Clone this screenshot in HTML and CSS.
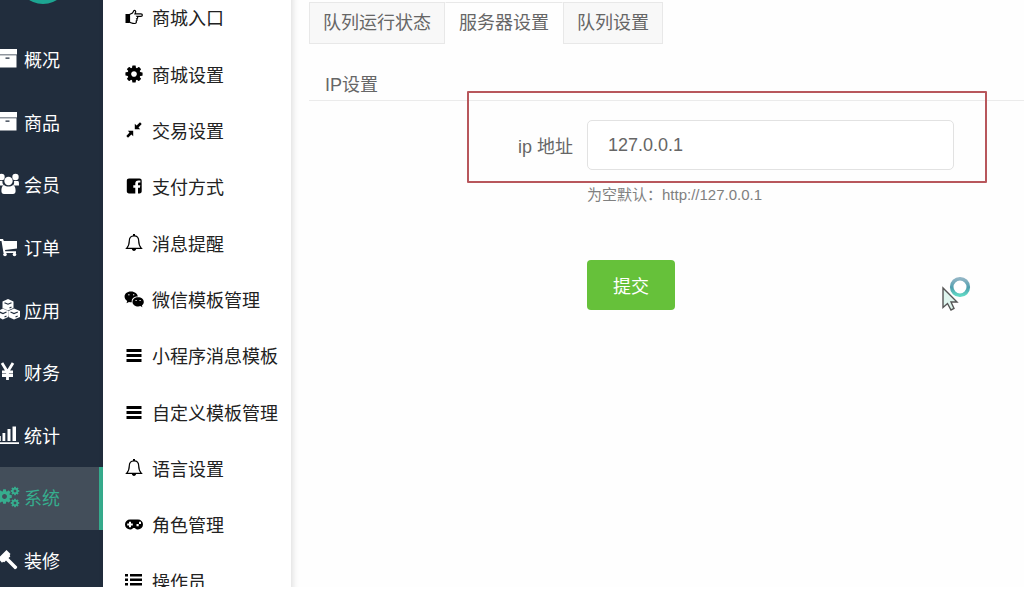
FILE: index.html
```html
<!DOCTYPE html>
<html lang="zh-CN">
<head>
    <meta charset="UTF-8">
    <meta name="viewport" content="width=device-width, initial-scale=1.0">
    <title>服务器设置</title>
    <link rel="stylesheet" href="styles.css">
</head>
<body>
    <!-- shared icons -->
    <svg class="icon-defs" aria-hidden="true">
        <symbol id="i-box" viewBox="0 0 22 22">
            <path d="M0 1h19v5.500H0z"/>
            <path fill-rule="evenodd" d="M0 7.300h18.500V19.500H0zM7.500 9.500v1.200h4V9.500z"/>
        </symbol>
        <symbol id="i-cog" viewBox="0 0 1792 1792">
            <path d="M1152 896q0-106-75-181t-181-75-181 75-75 181 75 181 181 75 181-75 75-181zm512-109v222q0 12-8 23t-20 13l-185 28q-19 54-39 91 35 50 107 138 10 12 10 25t-9 23q-27 37-99 108t-94 71q-12 0-26-9l-138-108q-44 23-91 38-16 136-29 186-7 28-36 28h-222q-14 0-24.500-8.500t-11.500-21.500l-28-184q-49-16-90-37l-141 107q-10 9-25 9-14 0-25-11-126-114-165-168-7-10-7-23 0-12 8-23 15-21 51-66.500t54-70.500q-27-50-41-99l-183-27q-13-2-21-12.500t-8-23.500v-222q0-12 8-23t19-13l186-28q14-46 39-92-40-57-107-138-10-12-10-24 0-10 9-23 26-36 98.500-107.500t94.500-71.500q13 0 26 10l138 107q44-23 91-38 16-136 29-186 7-28 36-28h222q14 0 24.500 8.500t11.500 21.500l28 184q49 16 90 37l142-107q9-9 24-9 13 0 25 10 129 119 165 170 7 8 7 22 0 12-8 23-15 21-51 66.500t-54 70.500q26 50 41 98l183 28q13 2 21 12.500t8 23.500z"/>
        </symbol>
        <symbol id="i-bell" viewBox="0 0 20 20">
            <path d="M10 2.800c-3 0-4.700 2.200-4.700 5 0 4-1 5.800-2.700 7.500h14.800c-1.700-1.700-2.700-3.500-2.700-7.500 0-2.800-1.700-5-4.700-5z" fill="none" stroke="currentColor" stroke-width="1.200"/>
            <path d="M9 1h2v2H9zM7.800 15.500h4.400c0 3.200-4.400 3.200-4.400 0z"/>
        </symbol>
        <symbol id="i-bars" viewBox="0 0 20 20">
            <path d="M2.500 4h15v3h-15zM2.500 9h15v3h-15zM2.500 14h15v3h-15z"/>
        </symbol>
    </svg>

    <div class="app">
        <nav class="sidebar">
            <div class="logo"></div>
            <ul class="nav-list">
                <li><a href="#"><svg><use href="#i-box"/></svg>概况</a></li>
                <li><a href="#"><svg><use href="#i-box"/></svg>商品</a></li>
                <li><a href="#"><svg viewBox="0 0 22 22">
                    <circle cx="3.500" cy="4" r="3.200"/><circle cx="17.500" cy="4" r="3.200"/>
                    <path d="M0 8h4.500c-.3 2.500.5 3.500 1.500 4.500H0zM16 8h3.500c1.500 0 1.500 1 1.500 4.500h-6c1-1 1.300-2 1-4.500z"/>
                    <circle cx="10.500" cy="8" r="4.200"/>
                    <path d="M6 12c2.500 2 6.500 2 9 0 2 .8 2.600 3 2.600 6 0 2-1 3-2.600 3H6c-1.600 0-2.600-1-2.600-3 0-3 .6-5.200 2.600-6z"/>
                </svg>会员</a></li>
                <li><a href="#"><svg viewBox="0 0 22 22">
                    <path d="M0 3h5l.8 2H19v7.500L7 14l.3 1.200H18V17H5.500L3.500 5H0z"/>
                    <circle cx="7" cy="18.500" r="1.800"/><circle cx="16.500" cy="18.500" r="1.800"/>
                </svg>订单</a></li>
                <li><a href="#"><svg viewBox="0 0 22 22">
                    <path d="M10 0l5.500 2.400V9L10 11.500 4.500 9V2.400zM4.800 9.500l5.500 2.500v6L4.800 20.500 0 18v-6zM16 9.500l6 2.500v6l-6 2.500-5.500-2.500v-6z"/>
                    <path class="cut" d="M6.500 3.700L10 5.200l3.500-1.500M1.500 13L5 14.600 8.500 13M12.500 13l3.500 1.600 3.800-1.600M11.500 9l2-1M6.500 18l2-1M17.500 18l2.200-1"/>
                </svg>应用</a></li>
                <li><a href="#"><svg viewBox="0 0 22 22">
                    <path d="M4 2l5.500 9L15 2M4 11h11M4 14.500h11M9.500 10v9" fill="none" stroke="currentColor" stroke-width="2.800"/>
                </svg>财务</a></li>
                <li><a href="#"><svg viewBox="0 0 22 22">
                    <path d="M0 12h2.800v5H0zM4.500 9h2.800v8H4.500zM9.500 5h3v12h-3zM14.500 2.500h3.500V17h-3.500zM0 18.200h21v1.800H0z"/>
                </svg>统计</a></li>
                <li class="active"><a href="#"><svg viewBox="0 0 22 22">
                    <use href="#i-cog" x="-2" y="2" width="17" height="17"/>
                    <use href="#i-cog" x="12" y="0" width="10" height="10"/>
                    <use href="#i-cog" x="12" y="12" width="10" height="10"/>
                </svg>系统</a></li>
                <li><a href="#"><svg viewBox="0 0 22 22">
                    <path d="M0 9.500L8.500 1l4 4-.8 1 .6 1.400L10.500 9l8.500 8.500c1 1-1.500 3.500-2.500 2.500L8 11.500l-1.700 1.700-1.300-.5-1 1z"/>
                </svg>装修</a></li>
            </ul>
        </nav>

        <nav class="submenu">
            <ul class="submenu-list">
                <li><a href="#"><svg viewBox="0 0 20 20">
                    <path d="M5.500 7.500l3-1.500 1.500-2.500c1.200-.3 2 .5 1.600 1.800L11 6.800h6c1.800 0 1.800 2.600 0 2.600h-4c1.200 1.200.8 2-.3 2.400.8 1 .4 1.800-.5 2.200.5 1.200 0 2.500-1.500 2.500-2.500 0-3.500-.8-5.200-1.300z" fill="none" stroke="currentColor" stroke-width="1.200"/>
                    <path d="M1.500 7h4v9h-4z"/>
                </svg>商城入口</a></li>
                <li><a href="#"><svg><use href="#i-cog"/></svg>商城设置</a></li>
                <li><a href="#"><svg viewBox="0 0 20 20">
                    <path d="M10.800 9.200V3.800l1.800 1.700L16 2.300 17.700 4l-3.200 3.400 1.700 1.800zM9.200 10.800v5.400l-1.800-1.700L4 17.700 2.300 16l3.200-3.400-1.700-1.800z"/>
                </svg>交易设置</a></li>
                <li><a href="#"><svg viewBox="0 0 20 20">
                    <path d="M5 2.500h10.500c1.300 0 2.200.9 2.200 2.200v10.600c0 1.300-.9 2.200-2.200 2.200H14v-5.800h1.900l.4-2.400H14V7.800c0-.8.400-1.200 1.200-1.200h1.200V4.500h-2c-2 0-3.100 1.200-3.100 3.100v1.700H9.300v2.400h2v5.800H5c-1.300 0-2.200-.9-2.200-2.200V4.700c0-1.300.9-2.200 2.200-2.200z"/>
                </svg>支付方式</a></li>
                <li><a href="#"><svg><use href="#i-bell"/></svg>消息提醒</a></li>
                <li><a href="#"><svg viewBox="0 0 20 20">
                    <path d="M7 2.500c4 0 6.500 2.400 6.800 5-4 0-6.600 2.300-6 5.700-1 .1-2 0-2.800-.3l-2.500 1.400.7-2.300C-1.500 8.800.3 2.500 7 2.500z"/>
                    <path d="M14 8.300c3.400 0 5.800 2 5.800 4.600 0 1.600-.8 2.700-1.900 3.500l.5 1.800-2-1.100c-4 1.100-7.900-1-7.900-4.200 0-2.600 2.400-4.600 5.500-4.600z"/>
                    <path class="dots" d="M4.200 5.800h1.300M9 5.800h1.300M11.500 11.500h1.200M15.500 11.500h1.200"/>
                </svg>微信模板管理</a></li>
                <li><a href="#"><svg><use href="#i-bars"/></svg>小程序消息模板</a></li>
                <li><a href="#"><svg><use href="#i-bars"/></svg>自定义模板管理</a></li>
                <li><a href="#"><svg><use href="#i-bell"/></svg>语言设置</a></li>
                <li><a href="#"><svg viewBox="0 0 20 20">
                    <path fill-rule="evenodd" d="M6 5.500h8a5 5 0 0 1 0 10c-1.500 0-2.600-.6-3.300-1.500H9.300c-.7.900-1.800 1.500-3.300 1.500a5 5 0 0 1 0-10zM5 7.800v1.700H3.200v2H5v1.800h2v-1.800h1.800v-2H7V7.800zM12.500 10v2.300h2.200V10zM15 7.700v2.200h2V7.700z"/>
                </svg>角色管理</a></li>
                <li><a href="#"><svg viewBox="0 0 20 20">
                    <path d="M1 3h3v2.500H1zM6 3h12v2.500H6zM1 7.500h3V10H1zM6 7.500h12V10H6zM1 12h3v2.500H1zM6 12h12v2.500H6zM1 16.500h3V19H1zM6 16.500h12V19H6z"/>
                </svg>操作员</a></li>
            </ul>
        </nav>

        <main class="content">
            <div class="tabs">
                <a href="#" class="tab">队列运行状态</a>
                <a href="#" class="tab active">服务器设置</a>
                <a href="#" class="tab">队列设置</a>
            </div>

            <h2 class="section-title">IP设置</h2>

            <form class="settings-form">
                <div class="form-group">
                    <label for="ip">ip 地址</label>
                    <input type="text" id="ip" name="ip" value="127.0.0.1">
                    <div class="highlight"></div>
                </div>
                <p class="help">为空默认：http://127.0.0.1</p>
                <button type="submit" class="submit-btn">提交</button>
            </form>
        </main>

        <svg class="cursor" viewBox="0 0 32 38" aria-hidden="true">
            <defs>
                <linearGradient id="ring" x1="0" y1="0" x2="0" y2="1">
                    <stop offset="0" stop-color="#8fb4c4"/>
                    <stop offset=".55" stop-color="#4f9fae"/>
                    <stop offset="1" stop-color="#5fd8c4"/>
                </linearGradient>
            </defs>
            <circle cx="19" cy="12" r="8.300" fill="#fff" stroke="url(#ring)" stroke-width="3.600"/>
            <path d="M2 13v19.500l4.500-4 3.500 6.500 3-1.500-3-6.500h6z" fill="#dff5ee" stroke="#555" stroke-width="1.400"/>
        </svg>
    </div>
</body>
</html>
```
FILE: styles.css
```css
* {
    margin: 0;
    padding: 0;
    box-sizing: border-box;
}

body {
    background: #fff;
    font-family: "Liberation Sans", "Noto Sans CJK SC", sans-serif;
    font-size: 18px;
    color: #666;
}

a {
    color: inherit;
    text-decoration: none;
}

ul {
    list-style: none;
}

svg {
    fill: currentColor;
    flex-shrink: 0;
}

.icon-defs {
    position: absolute;
    width: 0;
    height: 0;
}

.app {
    position: relative;
    display: flex;
    height: calc(100vh - 2px);
    overflow: hidden;
    background: #fefefe;
}

/* main sidebar */
.sidebar {
    width: 103px;
    flex-shrink: 0;
    display: flex;
    flex-direction: column;
    background: #212d3d;
    color: #fff;
    margin-bottom: -5px;
}

.logo {
    width: 52px;
    height: 52px;
    margin: -48px 0 25px 17px;
    border-radius: 50%;
    background: #1da592;
    flex-shrink: 0;
}

.nav-list,
.submenu-list {
    flex: 1;
    display: flex;
    flex-direction: column;
}

.nav-list li,
.submenu-list li {
    flex: 1;
}

.nav-list a,
.submenu-list a {
    display: flex;
    align-items: center;
    height: 100%;
    padding-bottom: 2px;
    white-space: nowrap;
}

.nav-list a {
    gap: 4px;
    margin-left: -2px;
}

.nav-list svg {
    width: 22px;
    height: 22px;
}

.nav-list .active {
    background: #434e5a;
    color: #36ad8e;
    border-right: 4px solid #36ad8e;
}

.cut {
    fill: none;
    stroke: #212d3d;
    stroke-width: 1.2px;
}

/* second level menu */
.submenu {
    width: 188px;
    flex-shrink: 0;
    display: flex;
    background: #fff;
    color: #222;
    margin: -10px 0 -23px;
    box-shadow: 2px 0 6px rgba(0,0,0,0.12);
}

.submenu-list a {
    gap: 8px;
    padding-left: 21px;
}

.submenu-list svg {
    width: 20px;
    height: 20px;
    color: #000;
}

.dots {
    stroke: #fff;
    stroke-width: 1px;
}

/* content */
.content {
    flex: 1;
    min-width: 0;
    padding: 2px 0 0 18px;
}

.tabs {
    display: flex;
}

.tab {
    height: 42px;
    line-height: 40px;
    padding: 0 13px;
    background: #f8f8f8;
    border: 1px solid #e8e8e8;
    white-space: nowrap;
}

.tab.active {
    background: #fefefe;
    border-color: #e8e8e8 transparent transparent;
}

.section-title {
    margin-top: 27px;
    padding-left: 16px;
    height: 30px;
    line-height: 28px;
    font-size: 18px;
    font-weight: normal;
    border-bottom: 1px solid #ebebeb;
}

.settings-form {
    padding: 19px 70px 0 0;
}

.form-group {
    position: relative;
    display: flex;
    align-items: center;
}

.form-group label {
    width: 264px;
    margin-right: 14px;
    text-align: right;
}

.form-group input {
    flex: 1;
    min-width: 0;
    height: 50px;
    padding: 0 20px;
    border: 1px solid #e2e2e2;
    border-radius: 5px;
    background: #fff;
    font-family: inherit;
    font-size: 18px;
    color: #666;
    outline: none;
}

.highlight {
    position: absolute;
    top: -29px;
    bottom: -13px;
    left: 158px;
    right: -33px;
    border: 2px solid #b8575c;
    border-radius: 1px;
    pointer-events: none;
}

.help {
    margin: 14px 0 0 278px;
    line-height: 22px;
    font-size: 15px;
    color: #808080;
}

.submit-btn {
    display: block;
    width: 88px;
    height: 50px;
    margin: 54px 0 0 278px;
    background: #66c13a;
    color: #fff;
    border: none;
    border-radius: 4px;
    font-family: inherit;
    font-size: 18px;
    cursor: pointer;
}

.cursor {
    position: absolute;
    top: 275px;
    right: 51px;
    width: 32px;
    height: 38px;
}
```
